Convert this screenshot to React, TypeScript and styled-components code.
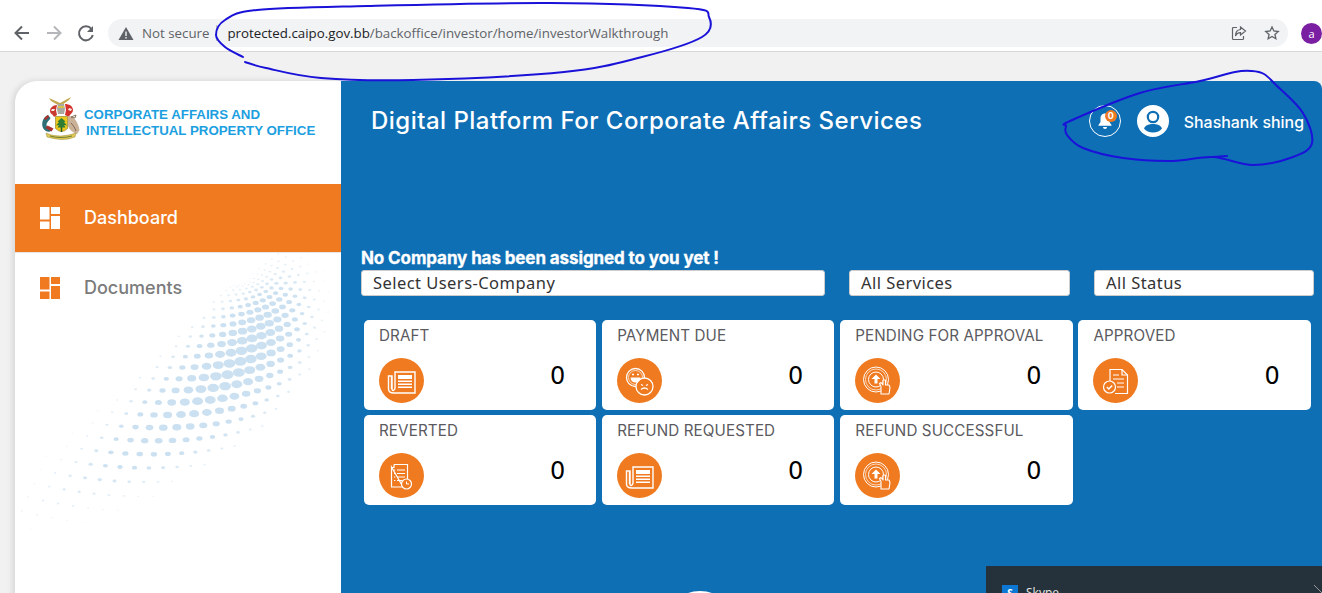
import React, { useMemo } from "react";
import styled, { createGlobalStyle } from "styled-components";

const Global = createGlobalStyle`
  html, body { margin: 0; padding: 0; height: 100%; overflow: hidden; background: #f1f1f2; }
  #root { height: 100%; }
  * { box-sizing: border-box; }
`;

const Page = styled.div`
  position: relative;
  width: 1322px;
  height: 593px;
  overflow: hidden;
  display: flex;
  flex-direction: column;
  font-family: Inter, "Liberation Sans", sans-serif;
`;

const BrowserBar = styled.header`
  height: 52px;
  flex: none;
  background: #fff;
  border-bottom: 1px solid #d8d8d8;
  display: flex;
  align-items: flex-start;
  padding: 19px 0 0 13px;
`;
const NavButtons = styled.div`
  display: flex;
  gap: 14px;
  margin-right: 13px;
  flex: none;
`;
const NavIcon = styled.svg`
  width: 18px;
  height: 28px;
  display: block;
`;
const Omnibox = styled.div`
  width: 1180px;
  flex: none;
  height: 28px;
  border-radius: 14px;
  background: #f1f3f4;
  display: flex;
  align-items: center;
  padding: 0 8px 0 10px;
  font-family: "Open Sans", "Liberation Sans", sans-serif;
  font-size: 13.3px;
`;
const NotSecure = styled.span`
  color: #5f6368;
  margin-left: 8px;
`;
const Divider = styled.span`
  width: 1px;
  height: 16px;
  background: #b9bcc0;
  margin: 0 10px 0 7px;
`;
const Host = styled.span`
  color: #202124;
`;
const UrlPath = styled.span`
  color: #5f6368;
`;
const OmniActions = styled.div`
  margin-left: auto;
  display: flex;
  gap: 17px;
  align-items: center;
`;
const Profile = styled.div`
  width: 21px;
  height: 21px;
  margin: 4px 0 0 13px;
  border-radius: 50%;
  background: #7b1fa2;
  color: #fff;
  font: 11px "Open Sans", sans-serif;
  display: flex;
  align-items: center;
  justify-content: center;
  flex: none;
`;

const Viewport = styled.div`
  flex: 1;
  padding: 29px 0 0 15px;
  min-height: 0;
`;
const Shell = styled.div`
  display: flex;
  height: 540px;
  width: 1307px;
`;
const Sidebar = styled.aside`
  position: relative;
  width: 326px;
  flex: none;
  background: #fff;
  border-top-left-radius: 22px;
  box-shadow: -2px 0 6px rgba(0, 0, 0, 0.12);
  overflow: hidden;
`;
const Halftone = styled.svg`
  position: absolute;
  left: 0;
  top: 0;
  width: 326px;
  height: 512px;
`;
const Brand = styled.div`
  position: relative;
  height: 103px;
  display: flex;
  align-items: flex-start;
  padding: 15px 0 0 26px;
`;
const BrandText = styled.div`
  margin: 11px 0 0 3px;
  font-family: "Liberation Sans", Arial, sans-serif;
  font-weight: 700;
  font-size: 13.3px;
  line-height: 16px;
  color: #1c9fe0;
  white-space: nowrap;
`;
const BrandLine = styled.div<{ $indent?: number }>`
  padding-left: ${(p) => p.$indent ?? 0}px;
`;
const NavItem = styled.div<{ $active?: boolean }>`
  position: relative;
  height: 69px;
  display: flex;
  align-items: center;
  gap: 24px;
  padding-left: 25px;
  background: ${(p) => (p.$active ? "#ef7a20" : "transparent")};
  color: ${(p) => (p.$active ? "#fff" : "#7b7b7b")};
  border-bottom: ${(p) => (p.$active ? "1px solid #e6e6e6" : "none")};
  font-size: 18px;
  line-height: 20px;
  font-weight: 500;
`;

const Main = styled.main`
  position: relative;
  flex: 1;
  background: #0f6fb5;
  border-top-right-radius: 8px;
  padding: 0 0 0 20px;
  overflow: hidden;
`;
const TopRow = styled.div`
  height: 79px;
  display: flex;
  align-items: center;
  padding: 0 18px 0 10px;
`;
const Title = styled.h1`
  margin: 0;
  font-size: 24px;
  font-weight: 500;
  color: #fff;
  letter-spacing: 0.47px;
  white-space: nowrap;
`;
const UserBox = styled.div`
  margin-left: auto;
  display: flex;
  align-items: center;
`;
const BellRing = styled.div`
  position: relative;
  width: 32px;
  height: 32px;
  border: 1px solid #fff;
  border-radius: 50%;
  display: flex;
  align-items: center;
  justify-content: center;
`;
const Badge = styled.span`
  position: absolute;
  top: 4px;
  right: 3px;
  width: 12px;
  height: 12px;
  border-radius: 50%;
  background: #ef7a20;
  color: #fff;
  font-size: 9px;
  font-weight: 700;
  line-height: 12px;
  text-align: center;
`;
const Avatar = styled.svg`
  width: 32px;
  height: 32px;
  margin: 0 15px 0 16px;
`;
const UserName = styled.span`
  color: #fff;
  font-size: 15.9px;
  font-weight: 500;
  position: relative;
  top: 2px;
`;
const Notice = styled.div`
  margin-top: 88px;
  height: 22px;
  line-height: 20px;
  font-size: 17px;
  font-weight: 700;
  color: #fff;
  -webkit-text-stroke: 0.3px #fff;
  letter-spacing: -0.1px;
  white-space: nowrap;
`;
const Filters = styled.div`
  display: flex;
  height: 26px;
`;
const Filter = styled.div<{ $w: number; $gap: number }>`
  width: ${(p) => p.$w}px;
  margin-right: ${(p) => p.$gap}px;
  background: #fff;
  border: 1px solid #ccc;
  border-radius: 3px;
  padding-left: 11px;
  font-family: "Noto Sans", "Open Sans", sans-serif;
  font-size: 16.5px;
  letter-spacing: 0.45px;
  line-height: 23px;
  color: #333;
`;
const Grid = styled.div`
  display: grid;
  grid-template-columns: repeat(4, 232.25px);
  grid-auto-rows: 90px;
  column-gap: 5.9px;
  row-gap: 5px;
  margin: 24px 0 0 3px;
`;
const Card = styled.div`
  background: #fff;
  border-radius: 5px;
  padding: 6px 0 0 15px;
`;
const CardTitle = styled.div`
  font-size: 15.2px;
  letter-spacing: 0.1px;
  line-height: 20px;
  font-weight: 400;
  color: #5b5a60;
  white-space: nowrap;
`;
const CardBody = styled.div`
  display: flex;
  align-items: flex-start;
  justify-content: space-between;
  margin-top: 12px;
  padding-right: 31px;
`;
const IconDisc = styled.svg`
  width: 45px;
  height: 45px;
  display: block;
`;
const Count = styled.div`
  font-family: "DejaVu Sans", "Open Sans", sans-serif;
  font-size: 24px;
  line-height: 32px;
  color: #000;
  margin-top: 2px;
`;

const Toast = styled.div`
  position: absolute;
  left: 986px;
  top: 566px;
  width: 336px;
  height: 27px;
  background: #26323b;
  color: #e8e8e8;
  font: 12px "Open Sans", sans-serif;
  overflow: hidden;
`;
const ToastIcon = styled.div`
  position: absolute;
  left: 16px;
  top: 19px;
  width: 16px;
  height: 16px;
  background: #0c78d4;
  color: #fff;
  font-size: 10px;
  font-weight: 700;
  text-align: center;
  line-height: 16px;
`;
const ToastLabel = styled.span`
  position: absolute;
  left: 40px;
  top: 18px;
`;
const ToastClose = styled.svg`
  position: absolute;
  right: 0;
  top: 18px;
  width: 9px;
  height: 9px;
`;
const PeekArc = styled.div`
  position: absolute;
  left: 342px;
  top: 510px;
  width: 34px;
  height: 14px;
  border-radius: 50%;
  background: #fff;
`;
const Ink = styled.svg`
  position: absolute;
  left: 0;
  top: 0;
  width: 1322px;
  height: 593px;
  pointer-events: none;
`;

type Pt = [number, number];
function smooth(points: Pt[], closed = false): string {
  const n = points.length;
  const at = (i: number) => (closed ? points[(i + n) % n] : points[Math.max(0, Math.min(n - 1, i))]);
  let d = `M${points[0][0]} ${points[0][1]}`;
  const last = closed ? n : n - 1;
  for (let i = 0; i < last; i++) {
    const p0 = at(i - 1), p1 = at(i), p2 = at(i + 1), p3 = at(i + 2);
    const c1: Pt = [p1[0] + (p2[0] - p0[0]) / 6, p1[1] + (p2[1] - p0[1]) / 6];
    const c2: Pt = [p2[0] - (p3[0] - p1[0]) / 6, p2[1] - (p3[1] - p1[1]) / 6];
    d += `C${c1[0].toFixed(1)} ${c1[1].toFixed(1)} ${c2[0].toFixed(1)} ${c2[1].toFixed(1)} ${p2[0]} ${p2[1]}`;
  }
  return d;
}

// Halftone swoosh, in page coordinates minus the sidebar origin.
function useDots() {
  return useMemo(() => {
    const P: Pt[] = [[22, 511], [170, 440], [320, 320], [272, 259]];
    const out: { x: number; y: number; rx: number; ry: number; o: number }[] = [];
    const B = (t: number): Pt => {
      const u = 1 - t;
      return [
        u * u * u * P[0][0] + 3 * u * u * t * P[1][0] + 3 * u * t * t * P[2][0] + t * t * t * P[3][0],
        u * u * u * P[0][1] + 3 * u * u * t * P[1][1] + 3 * u * t * t * P[2][1] + t * t * t * P[3][1],
      ];
    };
    const steps = 42;
    const t0 = 0.55;
    for (let i = 0; i <= steps; i++) {
      const t = i / steps;
      const p = B(t);
      const q = B(Math.min(1, t + 0.005));
      const r = B(Math.max(0, t - 0.005));
      let tx = q[0] - r[0], ty = q[1] - r[1];
      const l = Math.hypot(tx, ty) || 1;
      tx /= l; ty /= l;
      const nx = -ty, ny = tx;
      const halfWidth = 18 + 44 * Math.sin(Math.PI * (t * 0.75 + 0.1));
      const pitch = t < t0 ? 13 + 7 * (1 - t / t0) : 13 - 5 * ((t - t0) / (1 - t0));
      for (let j = -7; j <= 7; j++) {
        const s = (j + (i % 2 ? 0.5 : 0)) * pitch;
        if (Math.abs(s) > halfWidth) continue;
        const dt = (t - t0) / (t < t0 ? 0.36 : 0.3);
        const ds = s / (halfWidth * 0.7);
        const k = Math.exp(-dt * dt - ds * ds);
        out.push({
          x: p[0] + nx * s - 15,
          y: p[1] + ny * s - 81,
          rx: (0.4 + 4.4 * k) * 1.25,
          ry: (0.4 + 4.4 * k) * 0.9,
          o: Math.min(1, 0.22 + k * 2),
        });
      }
    }
    return out;
  }, []);
}

const DashIcon = ({ color }: { color: string }) => (
  <svg width="20" height="22" viewBox="0 0 20 22" fill={color}>
    <rect x="0" y="0" width="9.5" height="12.5" />
    <rect x="11" y="0" width="9" height="7" />
    <rect x="0" y="14.5" width="9.5" height="7.5" />
    <rect x="11" y="9" width="9" height="13" />
  </svg>
);

const Crest = () => (
  <svg width="40" height="44" viewBox="0 0 40 44" style={{ flex: "none" }}>
    <path d="M8 2l11 5 11-6-2 3-7 5h-4L10 5z" fill="#c2a94f" />
    <path d="M17 8h6l1 5-1 5h-6l-1-5z" fill="#a9a9a2" />
    <path d="M17 10h6v2h-6z" fill="#d8c24a" />
    <path d="M24 8c4 0 8 2 8 6 0 3-3 4-4 7l-4-2 1-5z" fill="#d4322c" />
    <path d="M16 9c-4 0-7 3-7 6 0 3 3 3 4 6l3-2-1-5z" fill="#c93a30" />
    <path d="M28 12l3 1-1 2-3-1zM11 13l3 0-1 2-3 0z" fill="#f4efe6" />
    <path d="M14.500 20.500h12v12q-6 6-12 0z" fill="#ecc81f" stroke="#8c7a1e" strokeWidth=".6" />
    <path d="M20.500 24v12" stroke="#2a5e25" strokeWidth="1.500" />
    <path d="M20.500 22l4 3.500-1.500.5 3 3.500-3-.5 1.500 2.500h-8l1.500-2.500-3 .5 3-3.500-1.500-.5z" fill="#2e7d32" />
    <path d="M7 19c-5 2-7 8-5 13 2 4 7 5 9 2l-2-3c-2 1-3.500 0-3.500-2 0-3 3-4.500 4-7z" fill="#2f6f76" />
    <path d="M3 23c1-2 3-3.500 4-4l1 2-3 3zM4.500 32l6 3.500 2-3-6-3z" fill="#a8322e" />
    <path d="M27 20c6 0 10 6 11.500 14l-2.500 4c-3-1-7-3-9-8z" fill="#c9b297" />
    <path d="M30 21l5-2-1 3zM30 27c2 2 4 5 5 8" stroke="#6e543c" strokeWidth=".8" fill="none" />
    <path d="M5 37q7 3.500 15 3t15-3l-1 4q-7 3-14 2.500T6 41z" fill="#dfc758" stroke="#8c7a1e" strokeWidth=".4" />
    <path d="M9 40q5 1.500 11 1.500t11-1.500" stroke="#4f6d24" strokeWidth=".8" fill="none" />
  </svg>
);

const disc = "#ef7a20";
const S = { fill: "none", stroke: "#fff", strokeWidth: 1.2 } as const;

const Paper = () => (
  <IconDisc viewBox="0 0 45 45">
    <circle cx="22.500" cy="22.500" r="22.500" fill={disc} />
    <g {...S} strokeWidth={1.4}>
      <path d="M16 14h20v21H15c-3 0-5.500-1-5.500-4V18h3.500v13c0 1.500 1 2 2 1s1-1.500 1-2z" />
      <path d="M12.500 18v13" />
    </g>
    <path d="M19 17h14v4H19zM19 22.500h14v1.600H19zM19 25.500h14v1.600H19zM19 28.500h14v1.600H19z" fill="#fff" />
  </IconDisc>
);
const Masks = () => (
  <IconDisc viewBox="0 0 45 45">
    <circle cx="22.500" cy="22.500" r="22.500" fill={disc} />
    <g {...S} strokeWidth={1.3}>
      <circle cx="18.500" cy="19.500" r="9" />
      <circle cx="18.500" cy="19.500" r="7" strokeWidth={0.7} />
      <circle cx="27.500" cy="28.500" r="8.500" fill={disc} />
      <path d="M24 31.500q3.500-3 7 0" />
      <path d="M24 26.500l2 1M31 26.500l-2 1" />
      <path d="M15 16.500h2M20 16.500h2" />
    </g>
    <path d="M13.500 19.500h10q-.5 5-5 5t-5-5z" fill="#fff" />
  </IconDisc>
);
const Touch = () => (
  <IconDisc viewBox="0 0 45 45">
    <circle cx="22.500" cy="22.500" r="22.500" fill={disc} />
    <g {...S} strokeWidth={1}>
      <circle cx="21" cy="21.500" r="12.500" />
      <circle cx="21" cy="21.500" r="10.500" strokeWidth={0.7} />
      <circle cx="21" cy="21.500" r="7.500" />
    </g>
    <path d="M21 16.500l-4.500 4.500h3v4.500h3V21h3z" fill="#fff" />
    <path d="M26 36V28.500l-1.500-3 1.500-1 2 2.500v-5h2.500v5h3.500l1 2.500-1 6.500z" fill={disc} stroke="#fff" strokeWidth={1.1} strokeLinejoin="round" />
  </IconDisc>
);
const DocCheck = () => (
  <IconDisc viewBox="0 0 45 45">
    <circle cx="22.500" cy="22.500" r="22.500" fill={disc} />
    <g {...S}>
      <path d="M17 23V11.500h12l5.500 5.500v18.500H22" />
      <path d="M29 11.500V17h5.500" />
      <path d="M20 17h6M20 21h11M24 25h7M24 29h7" />
      <circle cx="16.500" cy="29" r="6" fill={disc} />
      <path d="M13.800 29l2 2 3.400-3.600" strokeWidth={1.5} />
    </g>
  </IconDisc>
);
const DocClock = () => (
  <IconDisc viewBox="0 0 45 45">
    <circle cx="22.500" cy="22.500" r="22.500" fill={disc} />
    <g {...S}>
      <path d="M15 11.500h13.500v17M24 34H12.500V14z" />
      <path d="M12.500 14.500H15v-3" />
      <path d="M18 17h8M18 20.500h8M18 24h8M18 27.500h5" />
      <path d="M15 17h1.300M15 20.500h1.300M15 24h1.300M15 27.500h1.300" />
      <circle cx="27.500" cy="31" r="5" fill={disc} />
    </g>
    <path d="M27.500 28.500V31H30" stroke="#fff" strokeWidth="1" fill="none" />
  </IconDisc>
);

const cards: { title: string; Icon: React.FC }[] = [
  { title: "DRAFT", Icon: Paper },
  { title: "PAYMENT DUE", Icon: Masks },
  { title: "PENDING FOR APPROVAL", Icon: Touch },
  { title: "APPROVED", Icon: DocCheck },
  { title: "REVERTED", Icon: DocClock },
  { title: "REFUND REQUESTED", Icon: Paper },
  { title: "REFUND SUCCESSFUL", Icon: Touch },
];

const urlInk: Pt[] = [[243, 57], [225, 47], [216, 35], [225, 20], [257, 10], [367, 6], [550, 3], [688, 8], [709, 17], [702, 37], [642, 57], [564, 72], [413, 80], [321, 78], [266, 68], [245, 62]];
const userInk: Pt[] = [[1070, 121], [1140, 93], [1200, 81], [1235, 72], [1252, 71], [1264, 74], [1276, 85], [1303, 113], [1312, 143], [1293, 157], [1253, 165], [1213, 157], [1173, 161], [1123, 158], [1083, 148], [1067, 135], [1066, 126]];

export default function App() {
  const dots = useDots();
  return (
    <Page>
      <Global />
      <BrowserBar>
        <NavButtons>
          <NavIcon viewBox="0 0 18 28">
            <path d="M16 14H3M9 7.500L2.500 14 9 20.500" fill="none" stroke="#5f6368" strokeWidth="2" />
          </NavIcon>
          <NavIcon viewBox="0 0 18 28">
            <path d="M2 14h13M9 7.500l6.500 6.500L9 20.500" fill="none" stroke="#b4b6b9" strokeWidth="2" />
          </NavIcon>
          <NavIcon viewBox="0 0 18 28">
            <path d="M14.500 10a7 7 0 1 0 1.300 6" fill="none" stroke="#5f6368" strokeWidth="2" />
            <path d="M16 7v6h-6z" fill="#5f6368" />
          </NavIcon>
        </NavButtons>
        <Omnibox>
          <svg width="16" height="15" viewBox="0 0 16 15">
            <path d="M8 1l7.500 13H.5z" fill="#5f6368" />
            <path d="M7.300 5.500h1.400v4.500H7.300zM7.300 11h1.400v1.400H7.300z" fill="#f1f3f4" />
          </svg>
          <NotSecure>Not secure</NotSecure>
          <Divider />
          <Host>protected.caipo.gov.bb</Host>
          <UrlPath>/backoffice/investor/home/investorWalkthrough</UrlPath>
          <OmniActions>
            <svg width="16" height="16" viewBox="0 0 16 16" fill="none" stroke="#5f6368" strokeWidth="1.2">
              <path d="M6 2.500H2.500a1 1 0 0 0-1 1v10a1 1 0 0 0 1 1h9a1 1 0 0 0 1-1V11" />
              <path d="M9.500 2l5 4-5 4V7.600C7 7.600 5.500 8.500 4.500 11c0-4 2-6.200 5-6.500z" />
            </svg>
            <svg width="16" height="16" viewBox="0 0 24 24" fill="none" stroke="#5f6368" strokeWidth="2">
              <path d="M12 3l2.800 6 6.500.7-4.900 4.400 1.400 6.500L12 17.300l-5.800 3.300 1.400-6.500L2.700 9.700 9.200 9z" />
            </svg>
          </OmniActions>
        </Omnibox>
        <Profile>a</Profile>
      </BrowserBar>
      <Viewport>
        <Shell>
          <Sidebar>
            <Halftone viewBox="0 0 326 512">
              {dots.map((d, i) => (
                <ellipse
                  key={i}
                  cx={d.x.toFixed(1)}
                  cy={d.y.toFixed(1)}
                  rx={d.rx.toFixed(2)}
                  ry={d.ry.toFixed(2)}
                  fill="#cbe0f0"
                  opacity={d.o.toFixed(2)}
                />
              ))}
            </Halftone>
            <Brand>
              <Crest />
              <BrandText>
                <BrandLine>CORPORATE AFFAIRS AND</BrandLine>
                <BrandLine $indent={2}>INTELLECTUAL PROPERTY OFFICE</BrandLine>
              </BrandText>
            </Brand>
            <NavItem $active>
              <DashIcon color="#fff" />
              Dashboard
            </NavItem>
            <NavItem>
              <DashIcon color="#ef7a20" />
              Documents
            </NavItem>
          </Sidebar>
          <Main>
            <TopRow>
              <Title>Digital Platform For Corporate Affairs Services</Title>
              <UserBox>
                <BellRing>
                  <svg width="18" height="18" viewBox="0 0 18 18" fill="#fff">
                    <path d="M9 1.500c-3 0-4.500 2.300-4.500 5v3.500L2.500 13v.8h13V13l-2-3V6.500c0-2.700-1.500-5-4.500-5z" />
                    <path d="M7 15h4a2 2 0 0 1-4 0z" />
                  </svg>
                  <Badge>0</Badge>
                </BellRing>
                <Avatar viewBox="0 0 32 32">
                  <circle cx="16" cy="16" r="16" fill="#fff" />
                  <circle cx="16" cy="12" r="5.200" fill="none" stroke="#0f6fb5" strokeWidth="2.200" />
                  <path d="M7 23.500c1.500-3.500 5-4.500 9-4.500s7.500 1 9 4.500c-2 2.500-5 4-9 4s-7-1.500-9-4z" fill="#0f6fb5" />
                </Avatar>
                <UserName>Shashank shing</UserName>
              </UserBox>
            </TopRow>
            <Notice>No Company has been assigned to you yet !</Notice>
            <Filters>
              <Filter $w={464} $gap={24}>Select Users-Company</Filter>
              <Filter $w={221} $gap={24}>All Services</Filter>
              <Filter $w={220} $gap={0}>All Status</Filter>
            </Filters>
            <Grid>
              {cards.map(({ title, Icon }, i) => (
                <Card key={i}>
                  <CardTitle>{title}</CardTitle>
                  <CardBody>
                    <Icon />
                    <Count>0</Count>
                  </CardBody>
                </Card>
              ))}
            </Grid>
            <PeekArc />
          </Main>
        </Shell>
      </Viewport>
      <Toast>
        <ToastIcon>S</ToastIcon>
        <ToastLabel>Skype</ToastLabel>
        <ToastClose viewBox="0 0 9 9">
          <path d="M1 1l8 8" stroke="#999" strokeWidth="1" />
        </ToastClose>
      </Toast>
      <Ink viewBox="0 0 1322 593" fill="none" stroke="#1a12d8" strokeWidth="2" strokeLinecap="round">
        <path d={smooth(urlInk)} />
        <path d={smooth(userInk, true)} />
        <path d="M1213 157l14-1" />
      </Ink>
    </Page>
  );
}
